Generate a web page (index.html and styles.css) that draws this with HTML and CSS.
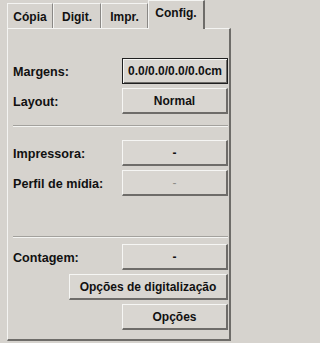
FILE: index.html
```html
<!DOCTYPE html>
<html>
<head>
<meta charset="utf-8">
<link rel="stylesheet" href="styles.css">
</head>
<body>
<div class="tabs">
  <div class="tab t1">Cópia</div>
  <div class="tab t2">Digit.</div>
  <div class="tab t3">Impr.</div>
  <div class="tab t4 active">Config.</div>
</div>
<div class="panel">
  <div class="row first">
    <span class="label">Margens:</span>
    <span class="btn focus">0.0/0.0/0.0/0.0cm</span>
  </div>
  <div class="row">
    <span class="label">Layout:</span>
    <span class="btn">Normal</span>
  </div>
  <div class="sep sep1"></div>
  <div class="row after1">
    <span class="label">Impressora:</span>
    <span class="btn">-</span>
  </div>
  <div class="row">
    <span class="label">Perfil de mídia:</span>
    <span class="btn disabled">-</span>
  </div>
  <div class="sep sep2"></div>
  <div class="row after2">
    <span class="label">Contagem:</span>
    <span class="btn">-</span>
  </div>
  <div class="row end">
    <span class="btn wide">Opções de digitalização</span>
  </div>
  <div class="row end">
    <span class="btn">Opções</span>
  </div>
</div>
</body>
</html>
```
FILE: styles.css
```css
html, body {
  margin: 0;
  padding: 0;
  background: #d6d3ce;
  font-family: "Liberation Sans", Arial, sans-serif;
  font-weight: bold;
  font-size: 12px;
  color: #111;
}
.tabs {
  display: flex;
  align-items: flex-end;
  height: 28px;
  padding-left: 7px;
}
.tab {
  box-sizing: border-box;
  height: 25px;
  border-top: 1px solid #f4f4f2;
  border-left: 1px solid #f4f4f2;
  border-right: 1px solid #8a8885;
  display: flex;
  justify-content: center;
  padding-top: 6px;
  position: relative;
}
.t1 { width: 46px; }
.t2 { width: 48px; }
.t3 { width: 47px; }
.t4 { width: 57px; }
.tab.active {
  height: 29px;
  margin-bottom: -1px;
  background: #d6d3ce;
  padding-top: 5px;
  border-right: 2px solid #6e6c69;
  z-index: 2;
}
.panel {
  box-sizing: border-box;
  margin-left: 7px;
  width: 224px;
  height: 313px;
  border-top: 1px solid #f4f4f2;
  border-left: 1px solid #f4f4f2;
  border-right: 2px solid #6e6c69;
  border-bottom: 2px solid #6e6c69;
  padding: 0 1px 0 5px;
  display: flex;
  flex-direction: column;
}
.row {
  display: flex;
  justify-content: space-between;
  align-items: center;
  margin-top: 4px;
}
.row.first { margin-top: 29px; }
.row.end { justify-content: flex-end; }
.label { padding-top: 1px; font-size: 12.6px; }
.btn {
  box-sizing: border-box;
  width: 106px;
  height: 26px;
  display: flex;
  align-items: center;
  justify-content: center;
  border-top: 1px solid #f6f6f4;
  border-left: 1px solid #f6f6f4;
  border-right: 2px solid #6e6c69;
  border-bottom: 2px solid #6e6c69;
  background: #d9d6d1;
}
.btn.focus {
  border: 1px solid #202020;
  box-shadow: inset 1px 1px 0 #f6f6f4, inset -1px -1px 0 #6e6c69;
}
.btn.wide { width: 159px; }
.btn.disabled { color: #8e8c88; font-weight: normal; }
.sep {
  height: 0;
  border-top: 1px solid #a3a19d;
  border-bottom: 1px solid #f4f4f2;
}
.sep1 { margin: 11px 0 0 0; }
.after1 { margin-top: 13px; }
.sep2 { margin: 40px 0 0 0; }
.after2 { margin-top: 6px; }
```
